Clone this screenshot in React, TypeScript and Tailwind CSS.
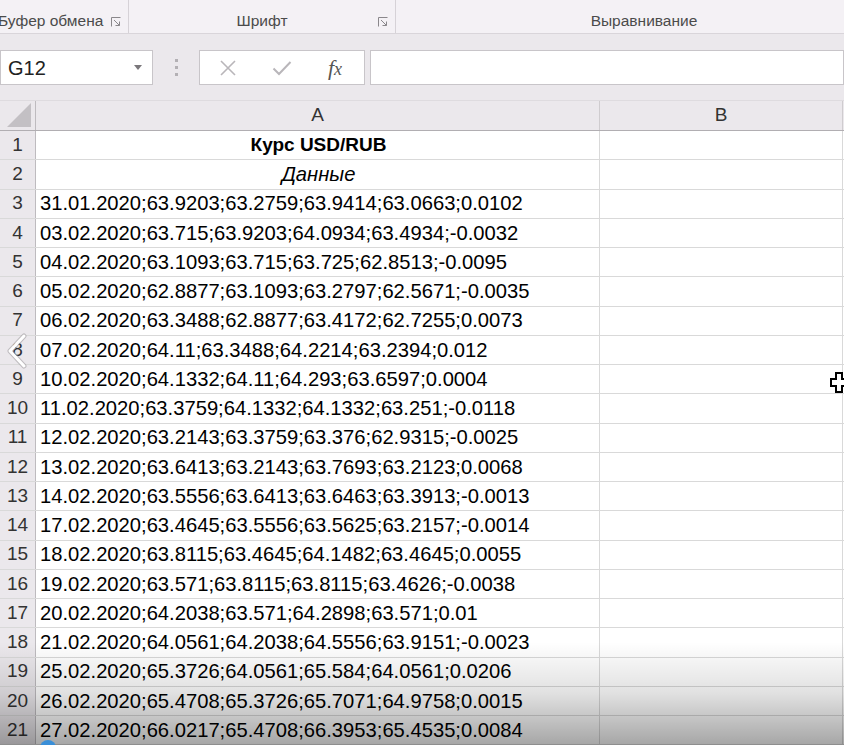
import React from "react";

const rows: string[] = [
	"31.01.2020;63.9203;63.2759;63.9414;63.0663;0.0102",
	"03.02.2020;63.715;63.9203;64.0934;63.4934;-0.0032",
	"04.02.2020;63.1093;63.715;63.725;62.8513;-0.0095",
	"05.02.2020;62.8877;63.1093;63.2797;62.5671;-0.0035",
	"06.02.2020;63.3488;62.8877;63.4172;62.7255;0.0073",
	"07.02.2020;64.11;63.3488;64.2214;63.2394;0.012",
	"10.02.2020;64.1332;64.11;64.293;63.6597;0.0004",
	"11.02.2020;63.3759;64.1332;64.1332;63.251;-0.0118",
	"12.02.2020;63.2143;63.3759;63.376;62.9315;-0.0025",
	"13.02.2020;63.6413;63.2143;63.7693;63.2123;0.0068",
	"14.02.2020;63.5556;63.6413;63.6463;63.3913;-0.0013",
	"17.02.2020;63.4645;63.5556;63.5625;63.2157;-0.0014",
	"18.02.2020;63.8115;63.4645;64.1482;63.4645;0.0055",
	"19.02.2020;63.571;63.8115;63.8115;63.4626;-0.0038",
	"20.02.2020;64.2038;63.571;64.2898;63.571;0.01",
	"21.02.2020;64.0561;64.2038;64.5556;63.9151;-0.0023",
	"25.02.2020;65.3726;64.0561;65.584;64.0561;0.0206",
	"26.02.2020;65.4708;65.3726;65.7071;64.9758;0.0015",
	"27.02.2020;66.0217;65.4708;66.3953;65.4535;0.0084",
];

// small dialog launcher in ribbon group corner
const Launcher = () => (
	<svg width="10" height="10" viewBox="0 0 10 10" className="shrink-0">
		<path d="M0.5 9.5V0.5H9.5" fill="none" stroke="#8a878b" strokeWidth="1" />
		<path d="M3 3L8.5 8.5M8.5 4.5V8.5H4.5" fill="none" stroke="#8a878b" strokeWidth="1" />
	</svg>
);

const RibbonGroup = ({ label, width, launcher, justify }: { label: string; width: string; launcher?: boolean; justify?: string }) => (
	<div className={`${width} h-full flex items-end pb-[3px] border-r border-[#d6d2d7] relative`}>
		<div className={`flex-1 flex ${justify || "justify-center"} text-[15.5px] text-[#4b4b4b] leading-none pb-[2px]`}>{label}</div>
		{launcher && (
			<div className="absolute right-[7px] bottom-[6px]">
				<Launcher />
			</div>
		)}
	</div>
);

const Row = ({ num, children, cls }: { num: number; children?: React.ReactNode; cls?: string }) => (
	<div className="flex h-[29.25px] border-b border-[#d9d9d9]">
		<div className="w-[36px] shrink-0 bg-[#ebe8ec] border-r border-[#bebbbf] flex items-center justify-center text-[19px] text-[#333]">{num}</div>
		<div className={`w-[564px] shrink-0 border-r border-[#d9d9d9] flex items-center px-[4px] text-[20.2px] text-black whitespace-nowrap overflow-hidden ${cls || ""}`}>
			{children}
		</div>
		<div className="w-[243px] shrink-0 border-r border-[#d9d9d9]" />
		<div className="flex-1" />
	</div>
);

export default function App() {
	return (
		<div className="w-[844px] h-[745px] overflow-hidden relative bg-white font-['Liberation_Sans',sans-serif]">
			{/* Ribbon group labels */}
			<div className="h-[34px] bg-[#f4f1f5] border-b border-[#d9d5da] flex">
				<RibbonGroup label="Буфер обмена" width="w-[129px]" launcher justify="justify-start -ml-[2px]" />
				<RibbonGroup label="Шрифт" width="w-[267px]" launcher />
				<div className="flex-1 h-full flex items-end justify-center pb-[5px] text-[15.5px] text-[#4b4b4b] leading-none pl-[48px]">Выравнивание</div>
			</div>

			{/* Formula bar */}
			<div className="h-[66px] bg-[#ebe8ec] flex items-start pt-[16px]">
				<div className="w-[153px] h-[35px] bg-white border border-[#c8c5c9] flex items-center justify-between pl-[7px] pr-[10px]">
					<span className="text-[20px] text-[#222]">G12</span>
					<svg width="8" height="5" viewBox="0 0 8 5">
						<path d="M0 0H8L4 5Z" fill="#7a777b" />
					</svg>
				</div>
				<div className="w-[46px] h-[35px] flex flex-col items-center justify-center gap-[4px]">
					<span className="w-[3px] h-[3px] bg-[#b3b0b4]" />
					<span className="w-[3px] h-[3px] bg-[#b3b0b4]" />
					<span className="w-[3px] h-[3px] bg-[#b3b0b4]" />
				</div>
				<div className="w-[166px] h-[35px] bg-white border border-[#c8c5c9] flex items-center">
					<div className="w-[56px] flex justify-center">
						<svg width="18" height="18" viewBox="0 0 18 18">
							<path d="M2 2L16 16M16 2L2 16" stroke="#b9b6ba" strokeWidth="1.6" />
						</svg>
					</div>
					<div className="w-[52px] flex justify-center">
						<svg width="20" height="16" viewBox="0 0 20 16">
							<path d="M1.5 8.5L7 14L18.5 2" fill="none" stroke="#b9b6ba" strokeWidth="2" />
						</svg>
					</div>
					<div className="flex-1 flex justify-center pr-[2px]">
						<span className="font-['Liberation_Serif',serif] italic text-[22px] text-[#555] leading-none">
							f<span className="text-[18px]">x</span>
						</span>
					</div>
				</div>
				<div className="w-[5px]" />
				<div className="flex-1 h-[35px] bg-white border border-[#c8c5c9]" />
			</div>

			{/* Column headers */}
			<div className="flex h-[31px] bg-[#ebe8ec] border-b border-[#b1aeb2] border-t border-t-[#dedbdf]">
				<div className="w-[36px] shrink-0 border-r border-[#bebbbf] relative">
					<svg width="24" height="24" viewBox="0 0 24 24" className="absolute right-[4px] bottom-[3px]">
						<path d="M24 0V24H0Z" fill="#c3c0c4" />
					</svg>
				</div>
				<div className="w-[564px] shrink-0 border-r border-[#cfcccf] flex items-center justify-center text-[19px] text-[#333]">A</div>
				<div className="w-[243px] shrink-0 border-r border-[#cfcccf] flex items-center justify-center text-[19px] text-[#333]">B</div>
				<div className="flex-1" />
			</div>

			{/* Cells */}
			<Row num={1} cls="justify-center font-bold">
				<span className="pl-[2px] text-[19px]">Курс USD/RUB</span>
			</Row>
			<Row num={2} cls="justify-center italic">
				<span className="pl-[2px]">Данные</span>
			</Row>
			{rows.map((r, i) => (
				<Row key={i} num={i + 3}>
					{r}
				</Row>
			))}

			{/* video shading at the bottom */}
			<div className="absolute left-0 right-0 top-[642px] bottom-0 bg-gradient-to-b from-transparent via-black/12 to-black/35 pointer-events-none" />

			{/* player back arrow */}
			<svg width="26" height="36" viewBox="0 0 26 36" className="absolute left-[3px] top-[333px] pointer-events-none">
				<path d="M21 3L7 18L21 33" fill="none" stroke="#9a979b" strokeWidth="5" strokeLinecap="round" strokeLinejoin="round" opacity="0.55" />
				<path d="M21 3L7 18L21 33" fill="none" stroke="#ffffff" strokeWidth="3" strokeLinecap="round" strokeLinejoin="round" />
			</svg>

			{/* fat cross cursor */}
			<svg width="20" height="22" viewBox="0 0 20 22" className="absolute left-[830px] top-[372px] pointer-events-none">
				<path d="M6 1H12V7H18V14H12V20H6V14H1V7H6Z" fill="#fff" stroke="#000" strokeWidth="2" />
			</svg>

			{/* cursor dot at bottom */}
			<div className="absolute left-[40px] top-[740px] w-[16px] h-[16px] rounded-full bg-[#3a8fd8]" />
		</div>
	);
}
